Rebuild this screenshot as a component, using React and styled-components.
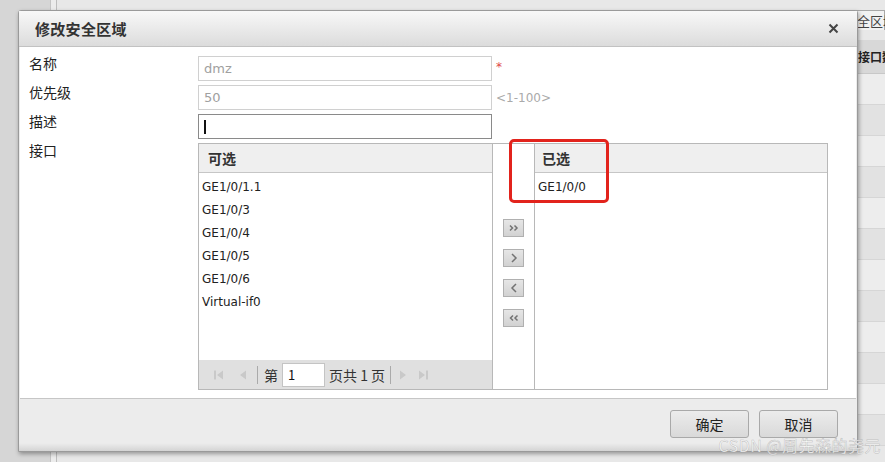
import React from "react";
import styled, { createGlobalStyle } from "styled-components";

const Global = createGlobalStyle`
  body { margin: 0; font-family: "DejaVu Sans", "Noto Sans CJK SC", sans-serif; }
  * { box-sizing: border-box; }
`;

const CJK = `"Noto Sans CJK SC", "DejaVu Sans", sans-serif`;

const Page = styled.div`
  position: relative;
  width: 885px;
  height: 462px;
  overflow: hidden;
  display: flex;
  background: #e8e8e8;
`;
const Sidebar = styled.div`
  flex: none;
  width: 51px;
  background: #d6d6d6;
  border-right: 1px solid #c4c4c4;
`;
const Gutter = styled.div`
  flex: none;
  width: 6px;
  background: #ececec;
  border-right: 1px solid #bdbdbd;
`;
const Main = styled.div`
  flex: 1;
  min-width: 0;
  display: flex;
  flex-direction: column;
  background: #e8e8e8;
`;
const Tab = styled.div`
  margin: 10px 0 0 733px;
  height: 20px;
  border: 1px solid #a8a8a8;
  border-bottom: none;
  padding-left: 53px;
  white-space: nowrap;
  font: 13px/20px ${CJK};
  color: #444;
  background: #f2f2f2;
`;
const Table = styled.div`
  margin-top: 10px;
  display: grid;
  grid-template-columns: 801px 1fr;
`;
const HeadCell = styled.div`
  height: 34px;
  background: #d8d8d8;
  font: bold 12px/34px ${CJK};
  color: #222;
  white-space: nowrap;
  border-bottom: 1px solid #c8c8c8;
`;
const Cell = styled.div`
  height: 31px;
  background: ${(p) => (p.$alt ? "#e2e2e2" : "#ededed")};
  border-bottom: 1px solid #d6d6d6;
`;

const Dialog = styled.div`
  position: absolute;
  left: 18px;
  top: 10px;
  width: 840px;
  height: 442px;
  border: 1px solid #9a9a9a;
  border-radius: 3px 3px 0 0;
  background: #ececec;
  box-shadow: 1px 2px 4px rgba(0, 0, 0, 0.35);
  display: flex;
  flex-direction: column;
`;
const TitleBar = styled.div`
  height: 36px;
  flex: none;
  background: linear-gradient(#f8f8f8, #dcdcdc);
  border-bottom: 1px solid #c2c2c2;
  display: flex;
  align-items: center;
  justify-content: space-between;
  padding: 0 18px 0 16px;
`;
const Title = styled.div`
  font: bold 15px ${CJK};
  color: #333;
  letter-spacing: 0.3px;
`;
const Body = styled.div`
  flex: none;
  height: 352px;
  margin: 0 1px;
  background: #fff;
  border-bottom: 1px solid #c6c6c6;
  padding: 9px 0 0 9px;
`;
const Form = styled.div`
  display: grid;
  grid-template-columns: 169px auto;
  row-gap: 4px;
  align-items: start;
`;
const Label = styled.div`
  font: 14px/18px ${CJK};
  color: #222;
  margin-top: -2px;
`;
const Field = styled.div`
  display: flex;
  align-items: center;
  gap: 4px;
`;
const Input = styled.div`
  width: 294px;
  height: 25px;
  border: 1px solid ${(p) => (p.$active ? "#8a8a8a" : "#d0d0d0")};
  padding: 0 5px;
  font-size: 13px;
  line-height: 23px;
  color: #a0a0a0;
  display: flex;
  align-items: center;
`;
const Caret = styled.span`
  width: 2px;
  height: 14px;
  background: #111;
`;
const Star = styled.span`
  color: #e04848;
  font-size: 12px;
  align-self: flex-start;
  margin-top: 4px;
`;
const Hint = styled.span`
  color: #aaa;
  font-size: 12px;
`;
const ListBox = styled.div`
  display: grid;
  grid-template-columns: 294px 42px 292px;
  width: 630px;
  height: 247px;
  border: 1px solid #b8b8b8;
`;
const Panel = styled.div`
  display: flex;
  flex-direction: column;
  border-right: ${(p) => (p.$divided ? "1px solid #b8b8b8" : "none")};
`;
const PanelHead = styled.div`
  height: 29px;
  background: #efefef;
  border-bottom: 1px solid #c6c6c6;
  padding-left: ${(p) => p.$pad}px;
  font: bold 14px/28px ${CJK};
  color: #333;
`;
const Items = styled.div`
  padding: 3px 0 0 3px;
  flex: 1;
`;
const Item = styled.div`
  height: 23px;
  line-height: 23px;
  font-size: 12px;
  color: #222;
`;
const Pager = styled.div`
  height: 29px;
  background: #e0e0e0;
  display: flex;
  align-items: center;
  padding-left: 14px;
  font: 14px ${CJK};
  color: #333;
`;
const PagerIcon = styled.svg`
  width: 12px;
  height: 12px;
  margin-right: ${(p) => p.$mr || 0}px;
  flex: none;
`;
const Sep = styled.span`
  width: 1px;
  height: 18px;
  background: #aaa;
  margin: 0 6px 0 ${(p) => p.$ml || 0}px;
`;
const PageInput = styled.div`
  width: 43px;
  height: 24px;
  border: 1px solid #c4c4c4;
  background: #fff;
  margin: 0 4px 0 4px;
  padding-left: 5px;
  font-size: 13px;
  line-height: 22px;
  color: #111;
`;
const Middle = styled.div`
  border-right: 1px solid #b8b8b8;
  display: flex;
  flex-direction: column;
  align-items: center;
  padding-top: 75px;
  gap: 12px;
  background: #fff;
`;
const ArrowBtn = styled.div`
  width: 21px;
  height: 18px;
  border: 1px solid #b0b0b0;
  background: linear-gradient(#e6e6e6, #d2d2d2);
  display: flex;
  align-items: center;
  justify-content: center;
`;
const Footer = styled.div`
  flex: 1;
  display: flex;
  justify-content: flex-end;
  align-items: flex-start;
  gap: 10px;
  padding: 11px 19px 0 0;
  background: linear-gradient(#ececec 0, #ececec 85%, #d4d4d4 100%);
`;
const Button = styled.div`
  width: 79px;
  height: 28px;
  border: 1px solid #a9a9a9;
  border-radius: 3px;
  background: linear-gradient(#ececec, #d9d9d9);
  font: 14px/26px ${CJK};
  color: #222;
  text-align: center;
`;
const Highlight = styled.div`
  position: absolute;
  left: 509px;
  top: 139px;
  width: 100px;
  height: 64px;
  border: 3px solid #e2231c;
  border-radius: 5px;
`;
const Watermark = styled.div`
  position: absolute;
  right: 4px;
  bottom: 5px;
  font: 16px ${CJK};
  letter-spacing: 0.5px;
  color: rgba(255, 255, 255, 0.9);
  -webkit-text-stroke: 0.5px rgba(150, 150, 150, 0.6);
  white-space: nowrap;
`;

const Chevron = ({ dir, double }) => {
  const list = double
    ? dir === "r"
      ? [[3, 4.5, 5.5, 7, 3, 9.5], [7.5, 4.5, 10, 7, 7.5, 9.5]]
      : [[6, 4.5, 3.5, 7, 6, 9.5], [10.5, 4.5, 8, 7, 10.5, 9.5]]
    : dir === "r"
    ? [[5, 3, 9, 7, 5, 11]]
    : [[9, 3, 5, 7, 9, 11]];
  return (
    <svg width="14" height="14" viewBox="0 0 14 14">
      {list.map((p, i) => (
        <polyline key={i} points={`${p[0]},${p[1]} ${p[2]},${p[3]} ${p[4]},${p[5]}`} fill="none" stroke="#737373" strokeWidth="1.5" />
      ))}
    </svg>
  );
};

const avail = ["GE1/0/1.1", "GE1/0/3", "GE1/0/4", "GE1/0/5", "GE1/0/6", "Virtual-if0"];

export default function App() {
  const rows = Array.from({ length: 12 });
  return (
    <Page>
      <Global />
      <Sidebar />
      <Gutter />
      <Main>
        <Tab>安全区域</Tab>
        <Table>
          <HeadCell />
          <HeadCell>接口数</HeadCell>
          {rows.map((_, i) => (
            <React.Fragment key={i}>
              <Cell $alt={i % 2 === 1} />
              <Cell $alt={i % 2 === 1} />
            </React.Fragment>
          ))}
        </Table>
      </Main>

      <Dialog>
        <TitleBar>
          <Title>修改安全区域</Title>
          <svg width="11" height="11" viewBox="0 0 11 11">
            <path d="M1.5 1.5 L9.5 9.5 M9.5 1.5 L1.5 9.5" stroke="#444" strokeWidth="2" />
          </svg>
        </TitleBar>
        <Body>
          <Form>
            <Label>名称</Label>
            <Field>
              <Input>dmz</Input>
              <Star>*</Star>
            </Field>
            <Label>优先级</Label>
            <Field>
              <Input>50</Input>
              <Hint>&lt;1-100&gt;</Hint>
            </Field>
            <Label>描述</Label>
            <Field>
              <Input $active>
                <Caret />
              </Input>
            </Field>
            <Label>接口</Label>
            <ListBox>
              <Panel $divided>
                <PanelHead $pad={9}>可选</PanelHead>
                <Items>
                  {avail.map((a) => (
                    <Item key={a}>{a}</Item>
                  ))}
                </Items>
                <Pager>
                  <PagerIcon viewBox="0 0 12 12" $mr={12}>
                    <rect x="1" y="1.5" width="2" height="9" fill="#c9c9c9" />
                    <polygon points="10,1.5 4,6 10,10.5" fill="#c9c9c9" />
                  </PagerIcon>
                  <PagerIcon viewBox="0 0 12 12" $mr={0}>
                    <polygon points="9,1.5 3,6 9,10.5" fill="#c9c9c9" />
                  </PagerIcon>
                  <Sep $ml={8} />
                  <span>第</span>
                  <PageInput>1</PageInput>
                  <span>页共 1 页</span>
                  <Sep $ml={5} />
                  <PagerIcon viewBox="0 0 12 12" $mr={8}>
                    <polygon points="3,1.5 9,6 3,10.5" fill="#c9c9c9" />
                  </PagerIcon>
                  <PagerIcon viewBox="0 0 12 12">
                    <polygon points="2,1.5 8,6 2,10.5" fill="#c9c9c9" />
                    <rect x="9" y="1.5" width="2" height="9" fill="#c9c9c9" />
                  </PagerIcon>
                </Pager>
              </Panel>
              <Middle>
                <ArrowBtn><Chevron dir="r" double /></ArrowBtn>
                <ArrowBtn><Chevron dir="r" /></ArrowBtn>
                <ArrowBtn><Chevron dir="l" /></ArrowBtn>
                <ArrowBtn><Chevron dir="l" double /></ArrowBtn>
              </Middle>
              <Panel>
                <PanelHead $pad={7}>已选</PanelHead>
                <Items>
                  <Item>GE1/0/0</Item>
                </Items>
              </Panel>
            </ListBox>
          </Form>
        </Body>
        <Footer>
          <Button>确定</Button>
          <Button>取消</Button>
        </Footer>
      </Dialog>

      <Highlight />
      <Watermark>CSDN @周先森的尧元</Watermark>
    </Page>
  );
}
